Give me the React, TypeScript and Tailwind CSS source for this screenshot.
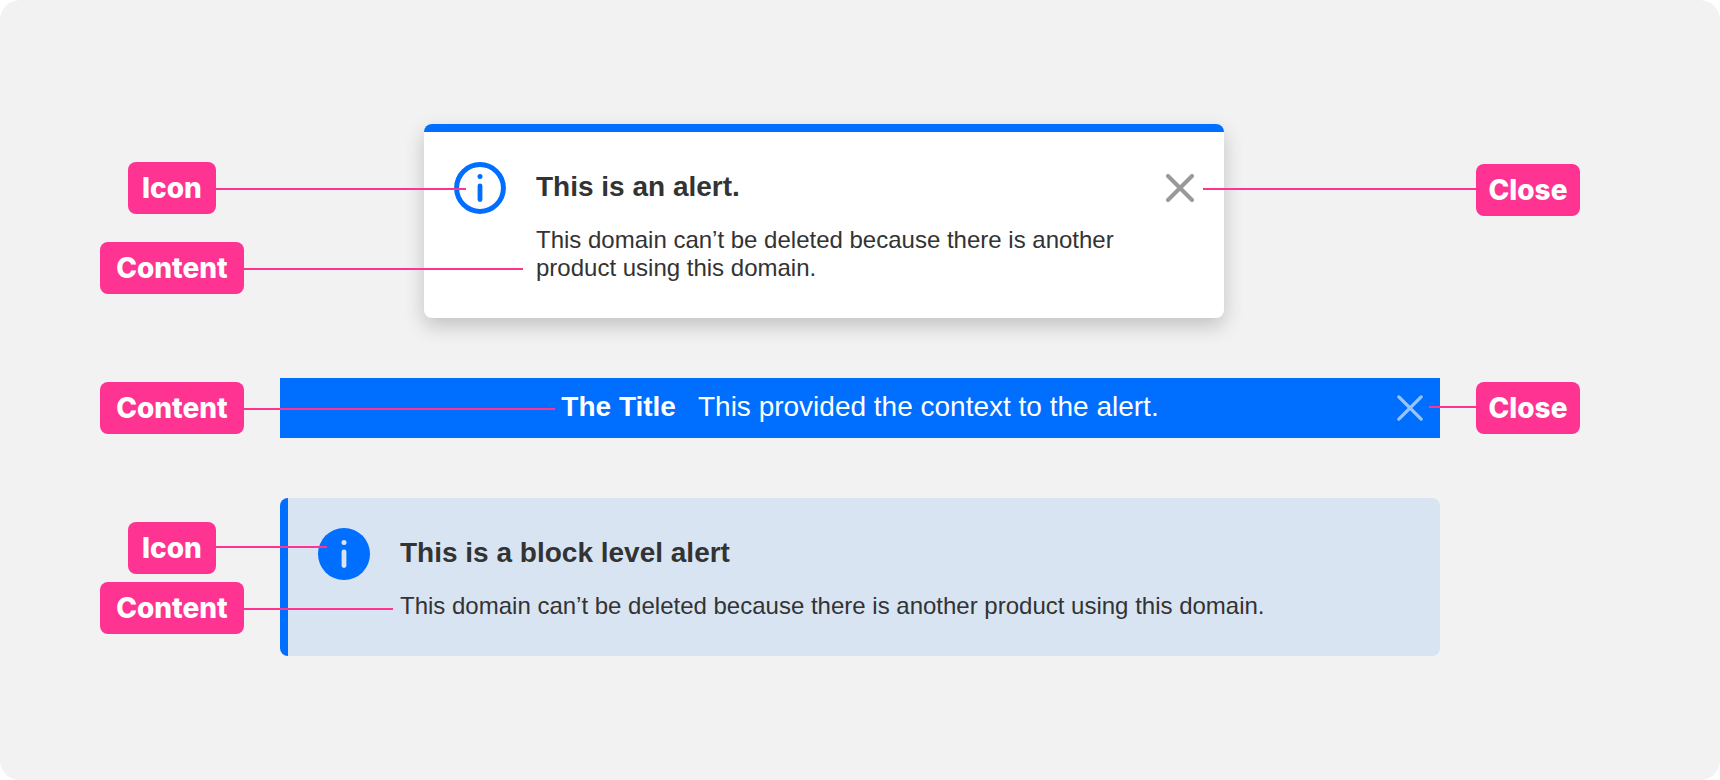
import type { ReactNode } from "react";

const lineWidths = {
  toOutlineIcon: "w-[250px]",
  toCardBody: "w-[279px]",
  toBannerTitle: "w-[311px]",
  toFilledIcon: "w-[111px]",
  toBlockBody: "w-[149px]",
  toCardClose: "w-[273px]",
  toBannerClose: "w-[47px]",
};

const labelWidths = {
  Icon: "min-w-[88px]",
  Content: "min-w-36",
  Close: "min-w-[104px]",
};

type CalloutProps = {
  label: keyof typeof labelWidths;
  line: keyof typeof lineWidths;
  side?: "left" | "right";
  raised?: boolean;
};

function Callout({ label, line, side = "left", raised = false }: CalloutProps) {
  return (
    <div className={`flex shrink-0 items-start ${side === "right" ? "flex-row-reverse" : ""}`}>
      <span
        className={`flex h-[52px] shrink-0 items-center justify-center rounded-lg bg-[#ff3391] font-['Inter',sans-serif] text-[28px] leading-8 font-extrabold text-white ${labelWidths[label]}`}
      >
        {label}
      </span>
      <span className={`h-0.5 shrink-0 bg-[#ff3391] ${raised ? "mt-6" : "mt-[26px]"} ${lineWidths[line]}`} />
    </div>
  );
}

function InfoIcon({ filled = false }: { filled?: boolean }) {
  const mark = filled ? "#d8e4f2" : "#006eff";
  return (
    <svg className="size-[52px] shrink-0" viewBox="0 0 52 52" fill="none" aria-hidden="true">
      {filled ? (
        <circle cx="26" cy="26" r="26" fill="#006eff" />
      ) : (
        <circle cx="26" cy="26" r="23.4" stroke="#006eff" strokeWidth="5" />
      )}
      <circle cx="26" cy="14.4" r="2.5" fill={mark} />
      <path d="M26 23.8v13.8" stroke={mark} strokeWidth="4.8" strokeLinecap="round" />
    </svg>
  );
}

function CloseButton({ className, small = false }: { className: string; small?: boolean }) {
  return (
    <button type="button" aria-label="Close" className={`shrink-0 cursor-pointer ${className}`}>
      <svg
        className={small ? "size-[26px]" : "size-7"}
        viewBox="0 0 28 28"
        fill="none"
        stroke="currentColor"
        strokeLinecap="round"
        strokeWidth={small ? 3.5 : 4}
      >
        <path d="M2 2l24 24M26 2L2 26" />
      </svg>
    </button>
  );
}

function AlertText({ title, children }: { title: string; children: ReactNode }) {
  return (
    <div className="flex flex-1 flex-col gap-[23px] pt-[9px] text-[#333]">
      <h2 className="text-[28px] leading-8 font-bold">{title}</h2>
      <p className="text-2xl leading-7">{children}</p>
    </div>
  );
}

function Row({ left, right, children }: { left: ReactNode; right?: ReactNode; children: ReactNode }) {
  return (
    <section className="flex items-start">
      <div className="relative z-10 w-[280px] shrink-0 pl-[100px]">{left}</div>
      <div className="min-w-0 flex-1">{children}</div>
      <div className="relative z-10 flex w-[280px] shrink-0 justify-end pr-[140px]">{right}</div>
    </section>
  );
}

export default function App() {
  return (
    <div className="bg-white font-['Liberation_Sans',Arial,sans-serif]">
      <main className="flex min-h-screen flex-col gap-[60px] rounded-[20px] bg-[#f2f2f2] pt-[124px] pb-[124px]">
        <Row
          left={
            <div className="flex flex-col gap-7 pt-[38px]">
              <div className="pl-7">
                <Callout label="Icon" line="toOutlineIcon" />
              </div>
              <Callout label="Content" line="toCardBody" />
            </div>
          }
          right={
            <div className="pt-10">
              <Callout label="Close" line="toCardClose" side="right" raised />
            </div>
          }
        >
          <div role="alert" className="mr-[216px] ml-36 overflow-hidden rounded-lg bg-white shadow-[0_8px_20px_rgba(0,0,0,0.2)]">
            <div className="h-2 bg-[#006eff]" />
            <div className="flex items-start gap-[30px] px-[30px] pt-[30px] pb-9">
              <InfoIcon />
              <AlertText title="This is an alert.">
                This domain can’t be deleted because there is another product using this domain.
              </AlertText>
              <CloseButton className="flex h-[52px] items-center text-[#999]" />
            </div>
          </div>
        </Row>

        <Row
          left={
            <div className="pt-1">
              <Callout label="Content" line="toBannerTitle" />
            </div>
          }
          right={
            <div className="pt-1">
              <Callout label="Close" line="toBannerClose" side="right" raised />
            </div>
          }
        >
          <div role="alert" className="grid min-h-[60px] grid-cols-[60px_1fr_60px] items-center bg-[#006eff] text-white">
            <div className="col-start-2 flex justify-center gap-[22px] pb-0.5 text-[28px] leading-8">
              <h2 className="font-bold">The Title</h2>
              <p>This provided the context to the alert.</p>
            </div>
            <CloseButton small className="flex h-[60px] items-center justify-center text-white/60" />
          </div>
        </Row>

        <Row
          left={
            <div className="flex flex-col gap-2 pt-6">
              <div className="pl-7">
                <Callout label="Icon" line="toFilledIcon" raised />
              </div>
              <Callout label="Content" line="toBlockBody" />
            </div>
          }
        >
          <div role="alert" className="flex overflow-hidden rounded-lg bg-[#d8e4f2]">
            <div className="w-2 shrink-0 bg-[#006eff]" />
            <div className="flex flex-1 items-start gap-[30px] px-[30px] pt-[30px] pb-9">
              <InfoIcon filled />
              <AlertText title="This is a block level alert">
                This domain can’t be deleted because there is another product using this domain.
              </AlertText>
            </div>
          </div>
        </Row>
      </main>
    </div>
  );
}
